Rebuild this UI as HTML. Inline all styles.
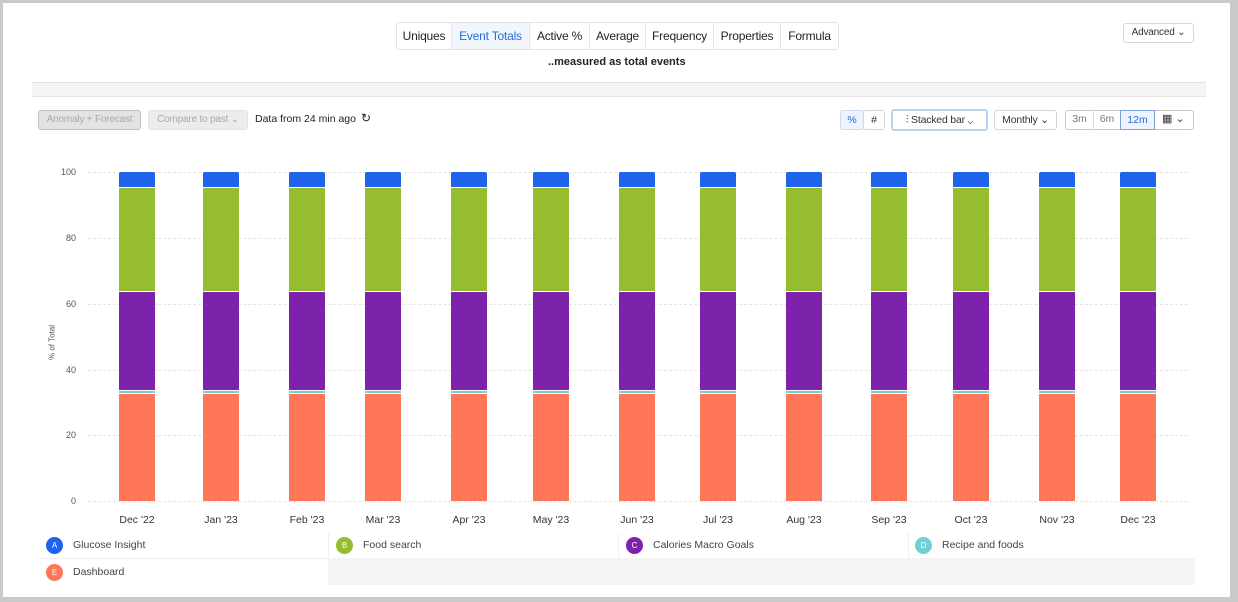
<!DOCTYPE html>
<html><head><meta charset="utf-8"><style>
*{box-sizing:border-box;margin:0;padding:0}
body{width:1238px;height:602px;background:#c9c9c9;font-family:"Liberation Sans",sans-serif;position:relative;overflow:hidden}
.frame{position:absolute;left:3px;top:3px;width:1227px;height:594px;background:#fff}
.a{position:absolute}
.tabs{position:absolute;left:396px;top:22px;height:28px;display:flex;border:1px solid #e2e2e2;border-radius:3px;font-size:12px;color:#222;letter-spacing:-0.2px}
.tabs div{line-height:26px;border-right:1px solid #e6e6e6;text-align:center;white-space:nowrap;overflow:hidden}
.tabs div:last-child{border-right:none}
.btn{position:absolute;height:20px;border:1px solid #d6d6d6;border-radius:3px;font-size:10.5px;line-height:18px;color:#333;background:#fff;text-align:center;white-space:nowrap;letter-spacing:-0.2px}
.ylab{position:absolute;left:50px;width:26px;text-align:right;font-size:9px;color:#555}
.grid{position:absolute;left:88px;width:1100px;border-top:1px dashed #e4e4e4}
.bar{position:absolute;width:36px}
.xl{position:absolute;top:514px;font-size:10.5px;color:#333;width:80px;text-align:center}
.leg{position:absolute;font-size:10.5px;color:#444;height:25px;line-height:25px}
.dot{display:inline-block;width:17px;height:17px;border-radius:50%;color:#fff;font-size:8px;line-height:17px;text-align:center;vertical-align:middle;margin:0 10px 0 8px}
</style></head><body>
<div class="frame"></div>
<div class="tabs"><div style="width:55px">Uniques</div><div style="width:78px;background:#f1f6fd;color:#2a6ad8">Event Totals</div><div style="width:60px">Active %</div><div style="width:56px">Average</div><div style="width:68px">Frequency</div><div style="width:67px">Properties</div><div style="width:57px">Formula</div></div>
<div class="a" style="left:548px;top:56px;font-size:11px;font-weight:bold;color:#222">..measured as total events</div>
<div class="btn" style="left:1123px;top:23px;width:71px;height:20px;font-size:10px">Advanced ⌄</div>
<div class="a" style="left:32px;top:82px;width:1174px;height:15px;background:#f3f4f3;border-top:1px solid #e2e2e2;border-bottom:1px solid #e6e6e6"></div>
<div class="btn" style="left:38px;top:110px;width:103px;background:#e3e3e3;border-color:#bfbfbf;color:#aaa;font-size:10px">Anomaly + Forecast</div>
<div class="btn" style="left:148px;top:110px;width:100px;background:#ececec;border-color:#e3e3e3;color:#aaa;font-size:10px">Compare to past ⌄</div>
<div class="a" style="left:255px;top:113px;font-size:10.5px;color:#222">Data from 24 min ago</div>
<div class="a" style="left:361px;top:111px;font-size:12px;color:#222">↻</div>
<div class="btn" style="left:840px;top:110px;width:24px;background:#eef4fd;color:#2a6ad8;border-color:#cbdcf4">%</div>
<div class="btn" style="left:863px;top:110px;width:22px">#</div>
<div class="btn" style="left:891px;top:109px;width:97px;height:22px;border:2px solid #bcd2f2;line-height:18px">⫶ Stacked bar ⌄</div>
<div class="btn" style="left:994px;top:110px;width:63px">Monthly ⌄</div>
<div class="btn" style="left:1065px;top:110px;width:129px;border-color:#c8c8c8"></div>
<div class="a" style="left:1066px;top:113px;width:27px;text-align:center;font-size:10.5px;color:#777">3m</div>
<div class="a" style="left:1093px;top:110px;height:20px;border-left:1px solid #ddd"></div>
<div class="a" style="left:1094px;top:113px;width:26px;text-align:center;font-size:10.5px;color:#777">6m</div>
<div class="a" style="left:1120px;top:110px;width:35px;height:20px;border:1px solid #7ea3dc;background:#eef4fd;color:#2a6ad8;font-size:10.5px;text-align:center;line-height:18px">12m</div>
<div class="a" style="left:1162px;top:112px;font-size:11px;color:#333">▦ ⌄</div>

<div class="ylab" style="top:167px">100</div><div class="grid" style="top:172px"></div>
<div class="ylab" style="top:233px">80</div><div class="grid" style="top:238px"></div>
<div class="ylab" style="top:299px">60</div><div class="grid" style="top:304px"></div>
<div class="ylab" style="top:365px">40</div><div class="grid" style="top:370px"></div>
<div class="ylab" style="top:430px">20</div><div class="grid" style="top:435px"></div>
<div class="ylab" style="top:496px">0</div><div class="grid" style="top:501px"></div>
<div class="a" style="left:22px;top:338px;transform:rotate(-90deg);font-size:8px;color:#555;width:60px;text-align:center">% of Total</div>

<div id="bars"></div>
<script>
var xs=[119,203,289,365,451,533,619,700,786,871,953,1039,1120];
var lb=["Dec '22","Jan '23","Feb '23","Mar '23","Apr '23","May '23","Jun '23","Jul '23","Aug '23","Sep '23","Oct '23","Nov '23","Dec '23"];
var h="";
xs.forEach(function(x,i){
h+='<div class="bar" style="left:'+x+'px;top:172px;height:15px;background:#1f63ec;border-radius:2px 2px 0 0"></div>';
h+='<div class="bar" style="left:'+x+'px;top:188px;height:103px;background:#95bd2f"></div>';
h+='<div class="bar" style="left:'+x+'px;top:292px;height:98px;background:#7d22ab"></div>';
h+='<div class="bar" style="left:'+x+'px;top:391px;height:2px;background:#6fd0d4"></div>';
h+='<div class="bar" style="left:'+x+'px;top:394px;height:107px;background:#ff7659"></div>';
h+='<div class="xl" style="left:'+(x-22)+'px">'+lb[i]+'</div>';
});
document.getElementById('bars').innerHTML=h;
</script>

<div class="a" style="left:328px;top:558px;width:867px;height:27px;background:#f3f4f3"></div>
<div class="a" style="left:38px;top:558px;width:290px;border-top:1px solid #eee"></div>
<div class="a" style="left:328px;top:533px;height:25px;border-left:1px solid #eee"></div>
<div class="a" style="left:618px;top:533px;height:25px;border-left:1px solid #eee"></div>
<div class="a" style="left:908px;top:533px;height:25px;border-left:1px solid #eee"></div>
<div class="leg" style="left:38px;top:533px"><span class="dot" style="background:#1f63ec">A</span>Glucose Insight</div>
<div class="leg" style="left:328px;top:533px"><span class="dot" style="background:#95bd2f">B</span>Food search</div>
<div class="leg" style="left:618px;top:533px"><span class="dot" style="background:#7d22ab">C</span>Calories Macro Goals</div>
<div class="leg" style="left:907px;top:533px"><span class="dot" style="background:#6fd0d4">D</span>Recipe and foods</div>
<div class="leg" style="left:38px;top:560px"><span class="dot" style="background:#ff7659">E</span>Dashboard</div>
</body></html>
